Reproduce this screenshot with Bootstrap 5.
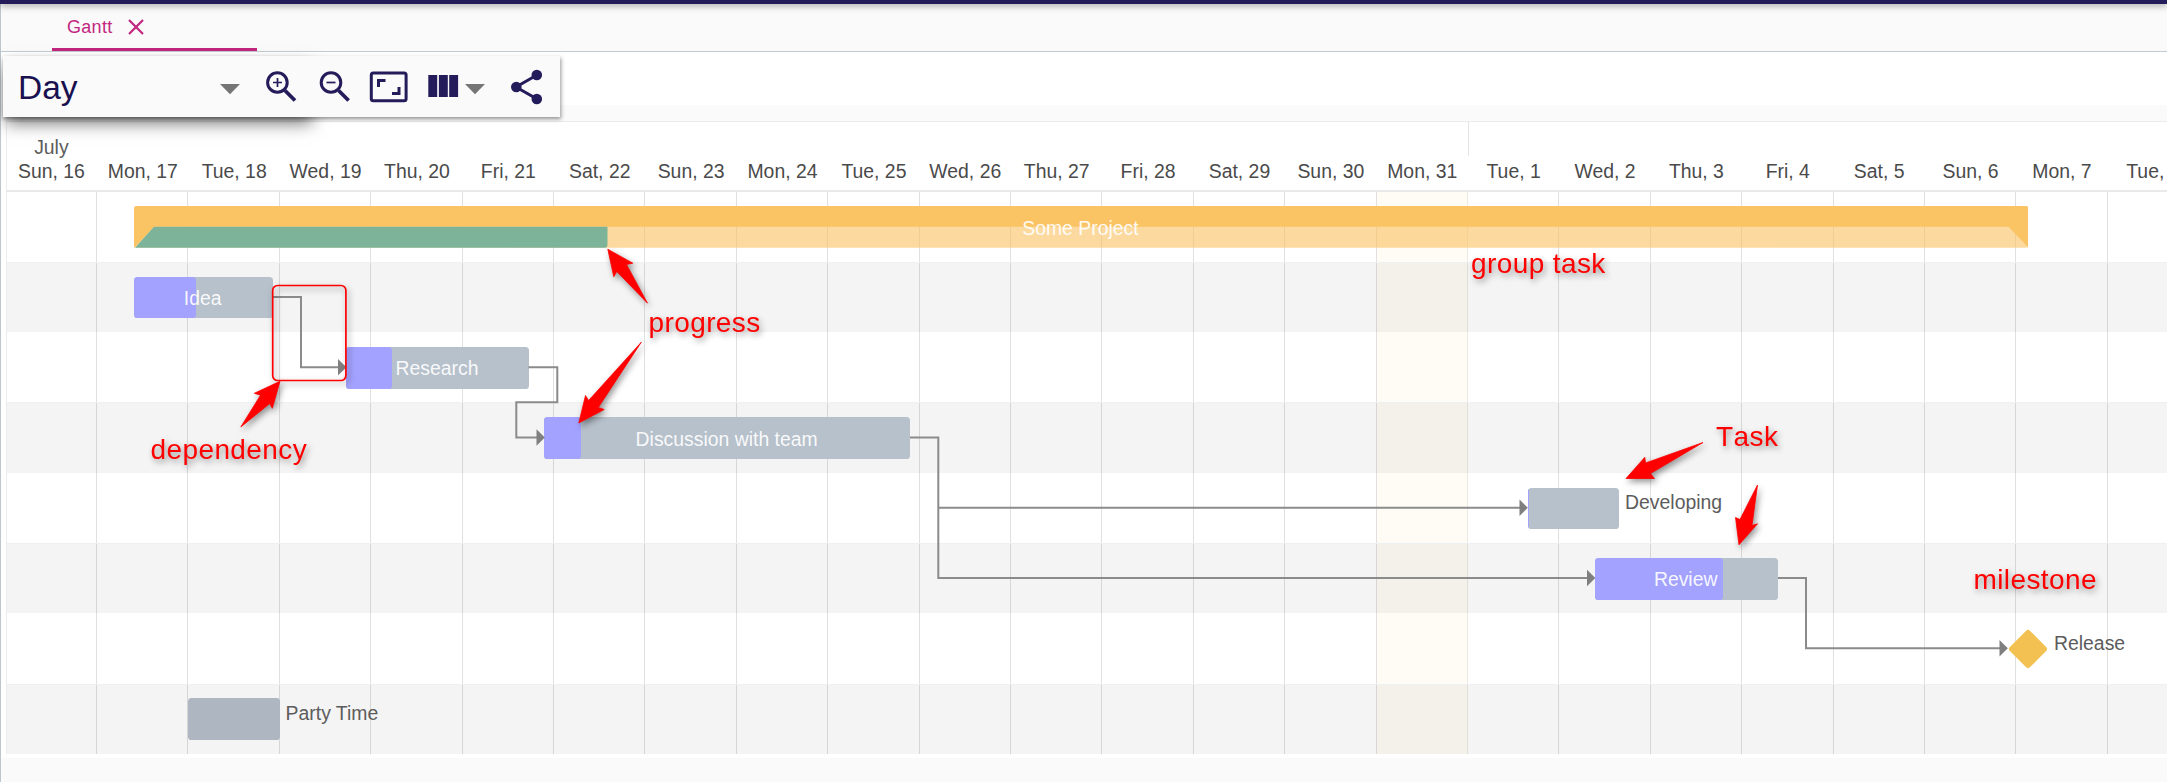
<!DOCTYPE html>
<html lang="en">
<head>
<meta charset="utf-8">
<title>Gantt</title>
<link href="https://cdn.jsdelivr.net/npm/bootstrap@5.3.0/dist/css/bootstrap.min.css" rel="stylesheet">
<style>
:root { --day: 91.4px; --navy: #241b5a; --pink: #c2267f; }
body { font-family: "Liberation Sans", Arial, sans-serif; background: #fafafa; height: 782px; overflow: hidden; font-size: 19.4px; line-height: 24px; }
.topbar { height: 4px; background: var(--navy); box-shadow: 0 1px 7px rgba(0,0,0,.5); z-index: 2; }
.shell { height: 778px; border-left: 1px solid #bcc6cd; }
.tabs-strip { height: 48px; background: #fafafa; border-bottom: 1px solid #c3cbd1; padding-left: 51px; }
.tab-item { width: 205px; height: 47px; border-bottom: 3px solid var(--pink); color: var(--pink); font-size: 18px; letter-spacing: .3px; padding: 2px 0 0 15px; gap: 15.5px; }
.tool-row { height: 53px; padding: 4px 0 0 2px; }
.tool-wrap { width: 557px; height: 61px; z-index: 3; isolation: isolate; }
.tool-wrap::before { content: ""; position: absolute; left: 4px; top: 6px; width: 304px; height: 54px; box-shadow: 0 6px 16px 1px rgba(0,0,0,.55); z-index: -1; }
.toolbox { height: 61px; background: #fafafa; box-shadow: 1px 2px 4px rgba(0,0,0,.42); }
.unit { width: 250px; padding-left: 15px; font-size: 33.5px; color: #19104f; }
.unit span { line-height: 63px; }
.icons { height: 61px; width: 557px; pointer-events: none; }
.spacer { height: 16px; background: #fafafa; }
.gantt { margin-left: 4.7px; box-shadow: inset 1px 0 #ececec; }
.g-head { height: 70.5px; border-top: 1px solid #ebebeb; border-bottom: 2px solid #e9e9e9; color: #4a4a4a; }
.months { height: 36.8px; }
.month { width: calc(var(--day) * 16 + 1px); height: 34px; border-right: 1px solid #e4e4e4; padding-top: 12.9px; color: #5c5c5c; }
.month span, .day { width: var(--day); flex: none; text-align: center; }
.g-body { height: 562.6px; padding-left: 1px; isolation: isolate; }
.g-cols { inset: 0; z-index: -1; }
.g-cols div { width: var(--day); flex: none; border-right: 1px solid #e0e0e0; }
.g-cols .holiday { background: #fefcf4; border-color: #ece9de; }
.g-row { height: 70.32px; padding-top: 1px; }
.g-row:nth-child(odd) { background: rgba(0,0,0,.044); box-shadow: inset 0 1px #edf1f4; }
.task { height: 41.8px; border-radius: 3.6px; background: #b7c1cb; color: rgba(255,255,255,.92); flex: none; }
.task i { position: absolute; left: 0; top: 0; height: 100%; background: #a3a2fe; border-radius: 3.6px; }
.task span { position: relative; padding-top: 1px; margin-left: -1px; }
.side { color: #5c5c5c; margin-left: 6px; padding-bottom: 12px; }
.group-task { background: transparent; }
.group-task svg { position: absolute; left: 0; top: 0; }
.gap-end { height: 4px; }
.overlay { left: 0; top: 0; z-index: 4; pointer-events: none; }
.notes text { font-size: 28px; letter-spacing: .4px; font-kerning: none; fill: #f00; }
.notes { filter: drop-shadow(2px 3px 3px rgba(0,0,0,.42)); }
</style>
<script src="https://cdn.jsdelivr.net/npm/bootstrap@5.3.0/dist/js/bootstrap.bundle.min.js"></script>
</head>
<body class="position-relative">
<header class="topbar position-relative"></header>
<main class="shell d-flex flex-column">
  <nav class="tabs-strip d-flex">
    <div class="tab-item d-flex align-items-center"><span>Gantt</span>
      <svg width="16" height="16" viewBox="0 0 16 16" stroke="currentColor" stroke-width="2.2"><path d="M1 1L15 15M15 1L1 15"/></svg>
    </div>
  </nav>
  <div class="bg-white tool-row">
    <div class="tool-wrap position-relative">
      <div class="toolbox d-flex"><div class="unit"><span>Day</span></div></div>
      <svg class="icons position-absolute top-0 start-0" viewBox="3 56 557 61" fill="none" stroke="#241b5a">
        <g fill="#757575" stroke="none"><path d="M220 84h20l-10 10.300z"/><path d="M465 84h20l-10 10.300z"/></g>
        <g stroke-width="3"><circle cx="277.400" cy="82.500" r="9.800"/><path d="M285 90.500l10 10" stroke-width="3.800"/><path d="M273 82.500h9M277.500 78v9" stroke-width="1.700"/></g>
        <g stroke-width="3"><circle cx="331" cy="82.500" r="9.800"/><path d="M338.600 90.500l10 10" stroke-width="3.800"/><path d="M326.500 82.500h9" stroke-width="1.700"/></g>
        <rect x="371.300" y="73" width="34.800" height="27.800" rx="2" stroke-width="3"/>
        <path d="M378.500 87v-6.500h7M392 93.500h7v-6.500" stroke-width="3"/>
        <path d="M428.300 75h8.900v22h-8.900zM438.900 75h8.900v22h-8.900zM449.200 75h8.900v22h-8.900z" fill="#241b5a" stroke="none"/>
        <path d="M537 75L516 87l21 12" stroke-width="3"/><g fill="#241b5a" stroke="none"><circle cx="536.800" cy="75" r="5.300"/><circle cx="516.300" cy="87" r="5.300"/><circle cx="536.800" cy="99" r="5.300"/></g>
      </svg>
    </div>
  </div>
  <div class="spacer"></div>
  <div class="bg-white"><section class="gantt">
    <div class="g-head">
      <div class="months"><div class="month d-flex"><span>July</span></div></div>
      <div class="d-flex">
        <div class="day">Sun, 16</div><div class="day">Mon, 17</div><div class="day">Tue, 18</div><div class="day">Wed, 19</div><div class="day">Thu, 20</div><div class="day">Fri, 21</div><div class="day">Sat, 22</div><div class="day">Sun, 23</div><div class="day">Mon, 24</div><div class="day">Tue, 25</div><div class="day">Wed, 26</div><div class="day">Thu, 27</div><div class="day">Fri, 28</div><div class="day">Sat, 29</div><div class="day">Sun, 30</div><div class="day">Mon, 31</div><div class="day">Tue, 1</div><div class="day">Wed, 2</div><div class="day">Thu, 3</div><div class="day">Fri, 4</div><div class="day">Sat, 5</div><div class="day">Sun, 6</div><div class="day">Mon, 7</div><div class="day">Tue, 8</div>
      </div>
    </div>
    <div class="g-body position-relative">
      <div class="g-cols position-absolute d-flex overflow-hidden"><div></div><div></div><div></div><div></div><div></div><div></div><div></div><div></div><div></div><div></div><div></div><div></div><div></div><div></div><div></div><div class="holiday"></div><div></div><div></div><div></div><div></div><div></div><div></div><div></div><div></div></div>
      <div class="g-row d-flex align-items-center"><div class="task group-task position-relative d-flex align-items-center justify-content-center" style="margin-left:127px;width:1894.5px">
        <svg width="1894.500" height="41.800"><rect width="1894.500" height="41.800" rx="3" fill="#fac364" fill-opacity=".62"/><path d="M3 0H1891.500Q1894.500 0 1894.500 3V41.800L1874.500 20.800H20L0 41.800V3Q0 0 3 0z" fill="#fac364"/><path d="M20 20.800H473.500V38.800Q473.500 41.800 470.500 41.800H1z" fill="#7db499"/></svg><span>Some Project</span></div></div>
      <div class="g-row d-flex align-items-center"><div class="task position-relative d-flex align-items-center justify-content-center" style="margin-left:127px;width:139px"><i style="width:62.5px"></i><span>Idea</span></div></div>
      <div class="g-row d-flex align-items-center"><div class="task position-relative d-flex align-items-center justify-content-center" style="margin-left:339.3px;width:183px"><i style="width:46px"></i><span>Research</span></div></div>
      <div class="g-row d-flex align-items-center"><div class="task position-relative d-flex align-items-center justify-content-center" style="margin-left:537.7px;width:365.6px"><i style="width:36.6px"></i><span>Discussion with team</span></div></div>
      <div class="g-row d-flex align-items-center"><div class="task position-relative overflow-hidden" style="margin-left:1521px;width:91.4px"><i style="width:1.5px"></i></div><div class="side">Developing</div></div>
      <div class="g-row d-flex align-items-center"><div class="task position-relative d-flex align-items-center justify-content-center" style="margin-left:1588px;width:183px"><i style="width:128px"></i><span>Review</span></div></div>
      <div class="g-row d-flex align-items-center"><svg class="flex-shrink-0" width="40" height="40" style="margin-left:2001.3px"><rect x="5.700" y="5.700" width="28.600" height="28.600" rx="3" transform="rotate(45 20 20)" fill="#f2c152"/></svg><div class="side">Release</div></div>
      <div class="g-row d-flex align-items-center"><div class="task" style="margin-left:181.5px;width:91.4px;background:#adb6c1"></div><div class="side">Party Time</div></div>
    </div>
  </section><div class="gap-end"></div></div>
</main>
<svg class="overlay position-absolute" width="2167" height="782">
  <g fill="none" stroke="#8b8b8b" stroke-width="2">
    <path d="M272.500 297H301V367.300H340"/><path d="M528.500 367.300H557.300V402.300H516.300V437.500H538"/>
    <path d="M910 437.500H938.300V578H1588M938.300 507.700H1521"/><path d="M1778 578H1806V648.200H2001"/>
  </g>
  <g fill="#7f7f7f"><path d="M338 359l8.300 8.300-8.300 8.300z"/><path d="M536.500 429.200l8.300 8.300-8.300 8.300z"/><path d="M1519.500 499.400l8.300 8.300-8.300 8.300z"/><path d="M1587 569.700l8.300 8.300-8.300 8.300z"/><path d="M1999.500 639.900l8.300 8.300-8.300 8.300z"/></g>
  <g class="notes">
    <rect x="272.700" y="285.500" width="73.200" height="95" rx="5" fill="none" stroke="#f00" stroke-width="1.700"/>
    <g fill="#f00" stroke="#f00" stroke-width=".8" stroke-linejoin="round">
      <path d="M280 381.300L254.300 393.300 260.500 395.200 240.800 427 269.700 403.500 272.300 408.300z"/>
      <path d="M607.800 249.200L632.800 263.200 626.500 264.500 647.500 303.200 616.800 271.500 613.800 276.800z"/>
      <path d="M578.800 423L585.500 395.500 588.600 400.500 641.300 342.200 598.300 407.500 604.200 409.500z"/>
      <path d="M1626 478.500L1644.800 457.300 1645.500 463 1703 442.500 1650.500 473.500 1654.500 478.500z"/>
      <path d="M1739 544.800L1735.500 517.500 1740 519.500 1757.500 485 1752 525.500 1757.500 523.800z"/>
    </g>
    <text x="150.500" y="459">dependency</text><text x="648.500" y="332">progress</text><text x="1471" y="273">group task</text><text x="1716" y="446">Task</text><text x="1973.500" y="589.300">milestone</text>
  </g>
</svg>
</body>
</html>
